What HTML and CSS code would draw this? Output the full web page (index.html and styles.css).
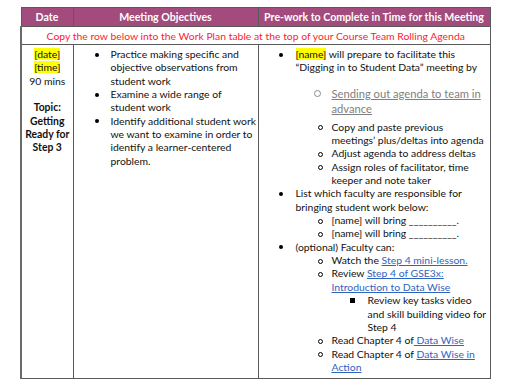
FILE: index.html
```html
<!DOCTYPE html>
<html>
<head>
<meta charset="utf-8">
<link rel="stylesheet" href="styles.css">
</head>
<body>
<div class="page">
<table class="plan">
<colgroup><col class="c1"><col class="c2"><col class="c3"></colgroup>
<thead>
<tr><th>Date</th><th>Meeting Objectives</th><th>Pre-work to Complete in Time for this Meeting</th></tr>
</thead>
<tbody>
<tr class="copyrow"><td colspan="3" class="copy">Copy the row below into the Work Plan table at the top of your Course Team Rolling Agenda</td></tr>
<tr class="main">
<td class="date">
<div><mark>[date]</mark></div>
<div><mark>[time]</mark></div>
<div>90 mins</div>
<div class="blank">&nbsp;</div>
<div class="b">Topic:</div>
<div class="b">Getting</div>
<div class="b">Ready for</div>
<div class="b">Step 3</div>
</td>
<td class="obj">
<ul class="l1">
<li><span class="t">Practice making specific and<br>objective observations from<br>student work</span></li>
<li><span class="t">Examine a wide range of<br>student work</span></li>
<li><span class="t">Identify additional student work<br>we want to examine in order to<br>identify a learner-centered<br>problem.</span></li>
</ul>
</td>
<td class="pre">
<ul class="l1">
<li><span class="t"><mark>[name]</mark> will prepare to facilitate this<br>“Digging in to Student Data” meeting by</span>
<ul class="grey">
<li><span class="t">Sending out agenda to team in<br>advance</span></li>
</ul>
<ul class="l2">
<li><span class="t">Copy and paste previous<br>meetings’ plus/deltas into agenda</span></li>
<li><span class="t">Adjust agenda to address deltas</span></li>
<li><span class="t">Assign roles of facilitator, time<br>keeper and note taker</span></li>
</ul>
</li>
<li><span class="t">List which faculty are responsible for<br>bringing student work below:</span>
<ul class="l2">
<li><span class="t">[name] will bring __________.</span></li>
<li><span class="t">[name] will bring __________.</span></li>
</ul>
</li>
<li><span class="t">(optional) Faculty can:</span>
<ul class="l2">
<li><span class="t">Watch the <a href="#">Step 4 mini-lesson.</a></span></li>
<li><span class="t">Review <a href="#">Step 4 of GSE3x:<br>Introduction to Data Wise</a></span>
<ul class="l3">
<li><span class="t">Review key tasks video<br>and skill building video for<br>Step 4</span></li>
</ul>
</li>
<li><span class="t">Read Chapter 4 of<a href="#"> Data Wise</a></span></li>
<li><span class="t">Read Chapter 4 of <a href="#">Data Wise in<br>Action</a></span></li>
</ul>
</li>
</ul>
</td>
</tr>
</tbody>
</table>
</div>
</body>
</html>
```

FILE: styles.css
```css
html, body {
  margin: 0;
  padding: 0;
  background: #ffffff;
}
body {
  font-family: Lato, "Liberation Sans", sans-serif;
  font-size: 10.4px;
  color: #111111;
}
.page {
  padding: 7px 0 0 20px;
}
.plan {
  border-collapse: collapse;
  table-layout: fixed;
  width: 469px;
}
.c1 { width: 52px; }
.c2 { width: 185px; }
.c3 { width: 232px; }
.plan th {
  background: #a24b7c;
  color: #ffffff;
  font-weight: bold;
  font-size: 10.6px;
  height: 18px;
  padding: 0;
  border: 1px solid #5a5a5a;
  text-align: center;
  vertical-align: middle;
  line-height: 14px;
  white-space: nowrap;
}
.plan td {
  border: 1px solid #5a5a5a;
  padding: 0;
}
.copy {
  color: #ff1a2e;
  text-align: center;
  height: 17px;
  vertical-align: middle;
  line-height: 14px;
  white-space: nowrap;
}
.main td {
  vertical-align: top;
  height: 330px;
  line-height: 13.35px;
  padding-top: 3px;
}
.plan td:first-child {
  border-left: 2px solid #6a6a6a;
}
.date {
  text-align: center;
}
.b {
  font-weight: bold;
}
mark {
  background: #ffff00;
  color: inherit;
}
.t {
  white-space: nowrap;
}
ul {
  list-style: none;
  margin: 0;
  padding: 0;
}
li {
  display: grid;
  grid-template-columns: var(--m) 1fr;
}
li > .t, li > ul {
  grid-column: 2;
}
li::before {
  content: "";
  grid-column: 1;
  grid-row: 1;
  align-self: start;
}
.obj .l1 { padding-left: 21px; }
.obj .l1 > li { --m: 16px; }
.pre .l1 { padding-left: 20px; }
.pre .l1 > li { --m: 17px; }
.l1 > li::before {
  width: 4px;
  height: 4px;
  border-radius: 50%;
  background: #000000;
  margin-top: 4.7px;
}
.l2 { margin-left: 22.5px; }
.l2 > li { --m: 13.5px; }
.l2 > li::before {
  width: 3px;
  height: 3px;
  border: 1px solid #000000;
  border-radius: 50%;
  margin-top: 4.7px;
}
.grey {
  margin: 11px 0 5px 18.5px;
  color: #808080;
  font-size: 11.2px;
  line-height: 15px;
}
.grey > li { --m: 17.5px; }
.grey > li > .t { text-decoration: underline; }
.grey > li::before {
  width: 5px;
  height: 5px;
  border: 1px solid #8a8a8a;
  border-radius: 50%;
  margin-top: 4.5px;
}
.l3 { margin-left: 18.5px; }
.l3 > li { --m: 17.5px; }
.l3 > li::before {
  width: 5px;
  height: 5px;
  background: #000000;
  margin-top: 4.2px;
}
a {
  color: #2f63c0;
  text-decoration: underline;
}
```
